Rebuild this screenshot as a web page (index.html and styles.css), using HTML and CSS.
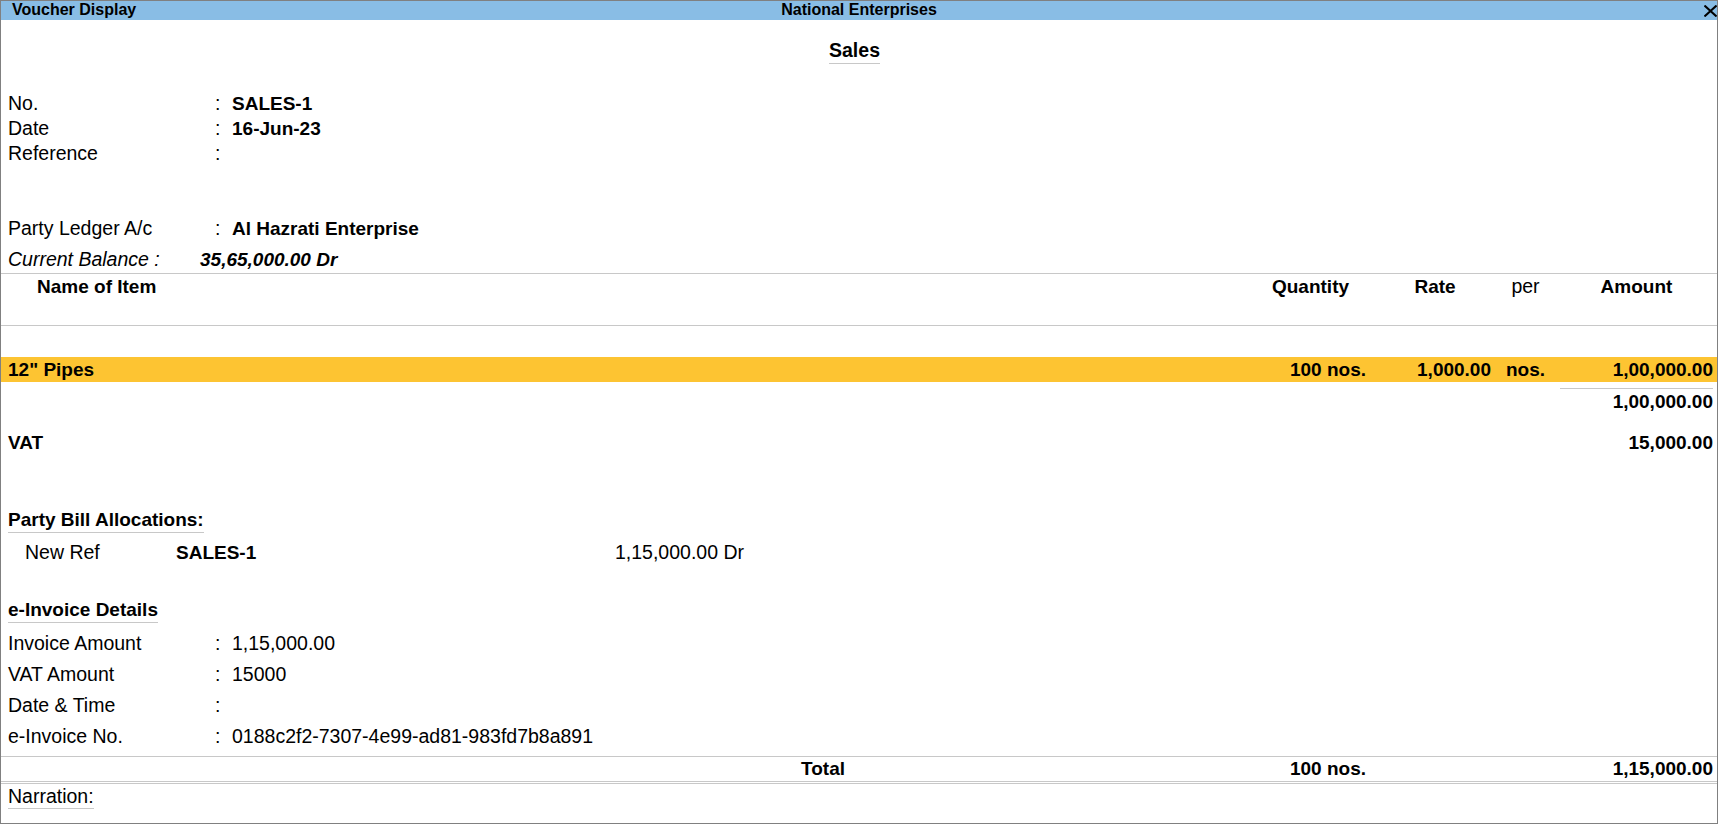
FILE: index.html
```html
<!DOCTYPE html>
<html lang="en">
<head>
<meta charset="utf-8">
<title>Voucher Display</title>
<link rel="stylesheet" href="styles.css">
</head>
<body>
<div class="window">
  <div class="titlebar">
    <div class="tb-left">Voucher Display</div>
    <div class="tb-center">National Enterprises</div>
    <div class="tb-right">
      <svg class="close" width="13" height="12" viewBox="0 0 13 12"><path d="M0.5 0.5 L12.5 11.5 M12.5 0.5 L0.5 11.5" stroke="#000" stroke-width="2" fill="none"/></svg>
    </div>
  </div>

  <div class="voucher">
    <div class="vtype"><span class="uline b vname">Sales</span></div>

    <div class="fields top">
      <div class="field"><span class="lbl">No.</span><span class="colon">:</span><span class="val b">SALES-1</span></div>
      <div class="field"><span class="lbl">Date</span><span class="colon">:</span><span class="val b">16-Jun-23</span></div>
      <div class="field"><span class="lbl">Reference</span><span class="colon">:</span><span class="val"></span></div>
    </div>

    <div class="fields party">
      <div class="field"><span class="lbl">Party Ledger A/c</span><span class="colon">:</span><span class="val b">Al Hazrati Enterprise</span></div>
    </div>

    <div class="balance"><span class="i">Current Balance :</span><span class="b i">35,65,000.00 Dr</span></div>

    <div class="items">
      <div class="irow ihead">
        <span class="c-name b hname">Name of Item</span>
        <span class="c-qty b center">Quantity</span>
        <span class="c-rate b center hrate">Rate</span>
        <span class="c-per center">per</span>
        <span class="c-amt b center">Amount</span>
      </div>
      <div class="irow iline selected">
        <span class="c-name b pad">12" Pipes</span>
        <span class="c-qty b right">100 nos.</span>
        <span class="c-rate b right">1,000.00</span>
        <span class="c-per b center">nos.</span>
        <span class="c-amt b right">1,00,000.00</span>
      </div>
      <div class="irow subtotal">
        <span class="c-name"></span>
        <span class="c-qty"></span>
        <span class="c-rate"></span>
        <span class="c-per"></span>
        <span class="c-amt b right rule">1,00,000.00</span>
      </div>
      <div class="irow vat">
        <span class="c-name b pad">VAT</span>
        <span class="c-qty"></span>
        <span class="c-rate"></span>
        <span class="c-per"></span>
        <span class="c-amt b right">15,000.00</span>
      </div>
    </div>

    <div class="section bill">
      <div class="sec-head"><span class="uline b">Party Bill Allocations:</span></div>
      <div class="bill-row"><span>New Ref</span><span class="b">SALES-1</span><span>1,15,000.00 Dr</span></div>
    </div>

    <div class="section einv">
      <div class="sec-head"><span class="uline b">e-Invoice Details</span></div>
      <div class="fields erows">
        <div class="field"><span class="lbl">Invoice Amount</span><span class="colon">:</span><span class="val">1,15,000.00</span></div>
        <div class="field"><span class="lbl">VAT Amount</span><span class="colon">:</span><span class="val">15000</span></div>
        <div class="field"><span class="lbl">Date &amp; Time</span><span class="colon">:</span><span class="val"></span></div>
        <div class="field"><span class="lbl">e-Invoice No.</span><span class="colon">:</span><span class="val">0188c2f2-7307-4e99-ad81-983fd7b8a891</span></div>
      </div>
    </div>

    <div class="footer">
      <div class="irow total">
        <span class="c-name b tlabel">Total</span>
        <span class="c-qty b right">100 nos.</span>
        <span class="c-rate"></span>
        <span class="c-per"></span>
        <span class="c-amt b right">1,15,000.00</span>
      </div>
      <div class="narration"><span class="uline">Narration:</span></div>
    </div>
  </div>
</div>
</body>
</html>
```

FILE: styles.css
```css
* { box-sizing: border-box; }

html, body {
  margin: 0;
  padding: 0;
  background: #ffffff;
}

body {
  font-family: "Liberation Sans", Arial, sans-serif;
  font-size: 19.5px;
  color: #000;
}

.window {
  width: 1718px;
  height: 824px;
  border: 1px solid #808080;
  display: flex;
  flex-direction: column;
  overflow: hidden;
}

.titlebar {
  height: 19px;
  flex: none;
  background: #89bde5;
  display: grid;
  grid-template-columns: 1fr auto 1fr;
  font-size: 16px;
  font-weight: bold;
  line-height: 17px;
}

.tb-left { padding-left: 11px; }
.tb-center { text-align: center; }
.tb-right {
  display: flex;
  justify-content: flex-end;
  align-items: flex-start;
}
.close {
  display: block;
  margin-top: 4px;
  margin-right: 0;
}

.voucher {
  flex: 1;
  display: flex;
  flex-direction: column;
  line-height: 25px;
}

.b { font-weight: bold; font-size: 19px; }
.i { font-style: italic; }

.uline {
  display: block;
  border-bottom: 1px solid #c8c8c8;
}

.vtype {
  margin-top: 18px;
  display: flex;
  justify-content: center;
}
.vname {
  font-size: 19.5px;
  margin-right: 9px;
}

.fields { padding-left: 7px; }
.fields.top { margin-top: 27px; }
.fields.party { margin-top: 50px; }

.field {
  display: grid;
  grid-template-columns: 207px 17px auto;
  height: 25px;
}

.balance {
  margin-top: 6px;
  padding-left: 7px;
  display: grid;
  grid-template-columns: 192px auto;
  height: 25px;
}

.items {
  margin-top: 1px;
  border-top: 1px solid #c8c8c8;
}

.irow {
  display: grid;
  grid-template-columns: 1254px 111px 125px 69px 153px 1fr;
  height: 25px;
  white-space: nowrap;
}

.ihead {
  height: 52px;
  border-bottom: 1px solid #c8c8c8;
}

.hname { padding-left: 36px; }
.hrate { padding-left: 13px; }
.pad { padding-left: 7px; }
.center { text-align: center; }
.right { text-align: right; }

.iline { margin-top: 31px; }
.selected { background: #fdc432; }

.subtotal {
  margin-top: 6px;
  height: 26px;
}
.rule { border-top: 1px solid #c8c8c8; }

.vat { margin-top: 16px; }

.section { padding-left: 7px; }
.sec-head { display: flex; }
.bill { margin-top: 52px; }

.bill-row {
  margin-top: 7px;
  padding-left: 17px;
  display: grid;
  grid-template-columns: 151px 439px auto;
  height: 25px;
}

.einv { margin-top: 32px; }
.erows { margin-top: 5px; padding-left: 0; }
.erows .field {
  height: 31px;
  line-height: 31px;
}

.footer {
  margin-top: auto;
}

.total {
  height: 28px;
  line-height: 24px;
  border-top: 1px solid #c8c8c8;
  border-bottom: 3px double #c8c8c8;
}

.tlabel { padding-left: 800px; }

.narration {
  display: flex;
  padding-left: 7px;
  line-height: 24px;
  padding-bottom: 14px;
}
```
